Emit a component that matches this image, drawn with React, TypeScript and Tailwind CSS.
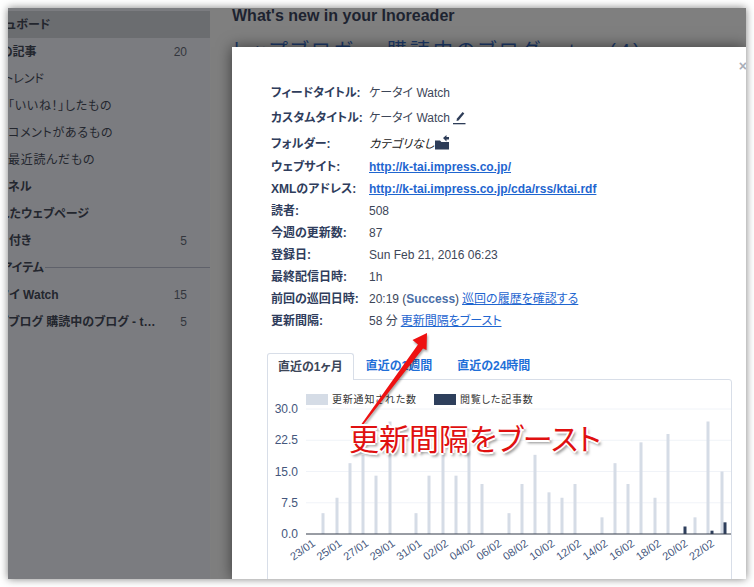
const FONT = "font-['Liberation_Sans','Noto_Sans_CJK_JP',sans-serif] [font-feature-settings:'palt']";

type SideRow = { text: string; ml: number; bold?: boolean; count?: number; rule?: boolean; wide?: boolean };

const sideRows: SideRow[] = [
  { text: 'ダッシュボード', ml: -35, bold: true },
  { text: 'すべての記事', ml: -39, bold: true, count: 20 },
  { text: 'トレンド', ml: -4 },
  { text: '「いいね！」したもの', ml: 0, wide: true },
  { text: 'コメントがあるもの', ml: 0, wide: true },
  { text: '最近読んだもの', ml: 0, wide: true },
  { text: 'マイチャンネル', ml: -54, bold: true },
  { text: '保存されたウェブページ', ml: -45, bold: true },
  { text: '付き', ml: 1, bold: true, count: 5 },
  { text: 'フィードアイテム', ml: -49, bold: true, rule: true },
  { text: 'ケータイ Watch', ml: -33, bold: true, count: 15 },
  { text: 'トップブログ 購読中のブログ - t…', ml: -31, bold: true, count: 5 },
];

function Sidebar() {
  return (
    <aside className="w-[202px] shrink-0 overflow-hidden bg-[#7b7c80] pt-[3px] text-[12px] text-[#23262e]">
      {sideRows.map((row, i) => (
        <div
          key={i}
          className={`flex h-[27px] items-center whitespace-nowrap ${row.rule ? '' : 'pr-[23px]'} ${i === 0 ? 'bg-[#6b6d70]' : ''}`}
        >
          <span
            className={`${row.bold ? 'font-bold' : ''} ${row.wide ? 'tracking-[0.7px]' : ''}`}
            style={{ marginLeft: row.ml }}
          >
            {row.text}
          </span>
          {row.rule ? <span className="ml-px h-px flex-1 bg-[#5f616a]" /> : null}
          {row.count ? <span className="ml-auto text-[#33363d]">{row.count}</span> : null}
        </div>
      ))}
    </aside>
  );
}

function Label({ children }: { children: string }) {
  return <span className="w-[98px] shrink-0 whitespace-nowrap font-bold text-[#2f3d5c]">{children}</span>;
}

function Row({ h, label, children }: { h: string; label: string; children: React.ReactNode }) {
  return (
    <div className={`flex items-center ${h}`}>
      <Label>{label}</Label>
      <div className="flex items-center whitespace-nowrap text-[#3d4658]">{children}</div>
    </div>
  );
}

const linkCls = 'text-[#1f66d0] underline';

function FeedInfo() {
  return (
    <div className="text-[12px]">
      <Row h="h-[22px]" label="フィードタイトル:">ケータイ Watch</Row>
      <Row h="h-[28px]" label="カスタムタイトル:">
        <span>ケータイ Watch</span>
        <svg viewBox="0 0 14 14" className="ml-[2px] h-[14px] w-[14px] text-[#2e3d58]">
          <path d="M1 12h12.5v1.3H1z" fill="currentColor" />
          <path d="M4.5 10l.5-2.5L10.6 1l1.7 1.4L6.5 9.5z" fill="currentColor" />
        </svg>
      </Row>
      <Row h="h-[24px]" label="フォルダー:">
        <span className="italic text-[#222]">カテゴリなし</span>
        <svg viewBox="0 0 14 15" className="ml-px mt-[-3px] h-[15px] w-[14px] text-[#2e3d58]">
          <path d="M0 5.5h5l1.4 1.6H14v7.4H0z" fill="currentColor" />
          <path d="M8 3l3.5-3v2H14v2.4h-2.5v2z" fill="currentColor" />
        </svg>
      </Row>
      <Row h="h-[22px]" label="ウェブサイト:">
        <a className={`font-bold ${linkCls}`}>http://k-tai.impress.co.jp/</a>
      </Row>
      <Row h="h-[22px]" label="XMLのアドレス:">
        <a className={`font-bold ${linkCls}`}>http://k-tai.impress.co.jp/cda/rss/ktai.rdf</a>
      </Row>
      <Row h="h-[22px]" label="読者:">508</Row>
      <Row h="h-[22px]" label="今週の更新数:">87</Row>
      <Row h="h-[22px]" label="登録日:">Sun Feb 21, 2016 06:23</Row>
      <Row h="h-[22px]" label="最終配信日時:">1h</Row>
      <Row h="h-[22px]" label="前回の巡回日時:">
        <span>20:19 (</span>
        <span className="font-bold text-[#4a6fa8]">Success</span>
        <span>)</span>
        <a className={`ml-[3px] ${linkCls}`}>巡回の履歴を確認する</a>
      </Row>
      <Row h="h-[22px]" label="更新間隔:">
        <span>58 分</span>
        <a className={`ml-[3px] ${linkCls}`}>更新間隔をブースト</a>
      </Row>
    </div>
  );
}

// x is the centre of the bar on the page, v its value on the 0-30 scale
const lightBars = [
  [323, 5], [337, 8.7], [350, 17], [363, 19], [376, 14], [390, 27], [416, 5], [429, 14], [443, 19],
  [456, 14], [469, 20], [482, 12], [509, 5], [522, 12], [535, 19], [549, 10], [562, 8.7], [575, 12],
  [602, 4], [615, 17], [628, 12], [641, 22], [655, 8.7], [668, 24], [695, 4], [708, 27], [722, 15],
];
const darkBars = [[685, 1.8], [712, 0.8], [725, 2.8]];
const xTicks = [
  '23/01', '25/01', '27/01', '29/01', '31/01', '02/02', '04/02', '06/02', '08/02', '10/02',
  '12/02', '14/02', '16/02', '18/02', '20/02', '22/02',
];

function Chart() {
  const base = 534;
  const unit = 125 / 30;
  return (
    <svg viewBox="268 380 463 200" className="block h-[200px] w-[463px]">
      <rect x="306" y="394" width="22" height="11" fill="#d5dce6" />
      <text x="332" y="403" fontSize="10" letterSpacing="0.8" fill="#333">更新通知された数</text>
      <rect x="434" y="394" width="22" height="11" fill="#2e3f5c" />
      <text x="460" y="403" fontSize="10" letterSpacing="0.8" fill="#333">閲覧した記事数</text>
      {[30, 22.5, 15, 7.5].map((v) => (
        <line key={v} x1="306" x2="731" y1={base - v * unit} y2={base - v * unit} stroke="#f0f3f8" />
      ))}
      {['30.0', '22.5', '15.0', '7.5', '0.0'].map((t, i) => (
        <text key={t} x="298" y={413 + i * 31.25} textAnchor="end" fontSize="12" fill="#44567c">{t}</text>
      ))}
      {lightBars.map(([x, v]) => (
        <rect key={x} x={x - 1.5} y={base - v * unit} width="3" height={v * unit} fill="#d5dce6" />
      ))}
      {darkBars.map(([x, v]) => (
        <rect key={x} x={x - 1.5} y={base - v * unit} width="3" height={v * unit} fill="#2e3f5c" />
      ))}
      <line x1="306" x2="731" y1={base} y2={base} stroke="#333a48" strokeWidth="1" />
      {xTicks.map((t, i) => (
        <text
          key={t}
          x={0}
          y={0}
          fontSize="11"
          textAnchor="end"
          fill="#44567c"
          transform={`translate(${316 + i * 26.6} 545) rotate(-35)`}
        >
          {t}
        </text>
      ))}
    </svg>
  );
}

function Tabs() {
  return (
    <div className="ml-[-4px] mt-[21px]">
      <div className="flex h-[26px] text-[12px] font-bold">
        <div className="relative z-10 mb-[-1px] flex items-center rounded-t-[3px] border border-b-0 border-[#d8dee8] bg-white px-[10px] text-[#3d4658]">
          直近の1ヶ月
        </div>
        <div className="ml-px flex items-center px-[11px] text-[#1f6fd8]">直近の1週間</div>
        <div className="ml-[3px] flex items-center px-[11px] text-[#1f6fd8]">直近の24時間</div>
      </div>
      <div className="w-[465px] rounded-tr-[3px] border border-[#d8dee8]">
        <Chart />
      </div>
    </div>
  );
}

function Modal() {
  return (
    <div className="absolute inset-y-0 right-0 top-[39px] left-[224px] overflow-hidden bg-white pl-[39px] pt-[35px] shadow-[0_0_14px_rgba(0,0,0,0.55)]">
      <span className="absolute right-[-1px] top-[12px] text-[14px] font-bold leading-none text-[#a9aeb8]">×</span>
      <FeedInfo />
      <Tabs />
    </div>
  );
}

function Callout() {
  return (
    <>
      <svg viewBox="0 0 754 587" className="pointer-events-none absolute inset-0 h-[587px] w-[754px] drop-shadow-[1px_2px_1px_rgba(0,0,0,0.35)]">
        <path d="M427 333L412.5 340L418 344.5L361.5 424L363 425L423 348.5L426.5 350Z" fill="#ee1111" />
      </svg>
      <span className="absolute left-[349px] top-[421px] whitespace-nowrap text-[30px] leading-[38px] text-[#e01010] [text-shadow:-2px_0_0_#fff,2px_0_0_#fff,0_-2px_0_#fff,0_2px_0_#fff,-1px_-1px_0_#fff,1px_-1px_0_#fff,-1px_1px_0_#fff,2px_3px_3px_rgba(0,0,0,0.5)]">
        更新間隔をブースト
      </span>
    </>
  );
}

export default function App() {
  return (
    <div className={`relative h-[587px] w-[754px] overflow-hidden bg-white ${FONT}`}>
      <div className="p-2">
        <div className="relative flex h-[571px] w-[738px] overflow-hidden bg-[#7f7f7f] shadow-[0_0_8px_rgba(0,0,0,0.5)]">
          <Sidebar />
          <main className="flex-1 whitespace-nowrap pl-[22px] pt-px">
            <h1 className="text-[16px] font-bold leading-[14px] text-[#1d2330]">What's new in your Inoreader</h1>
            <h2 className="mt-[16px] text-[20px] leading-[24px] tracking-[3px] text-[#1d3a6a]">トップブロガー 購読中のブログ - t… (4)</h2>
          </main>
          <Modal />
        </div>
      </div>
      <Callout />
    </div>
  );
}
